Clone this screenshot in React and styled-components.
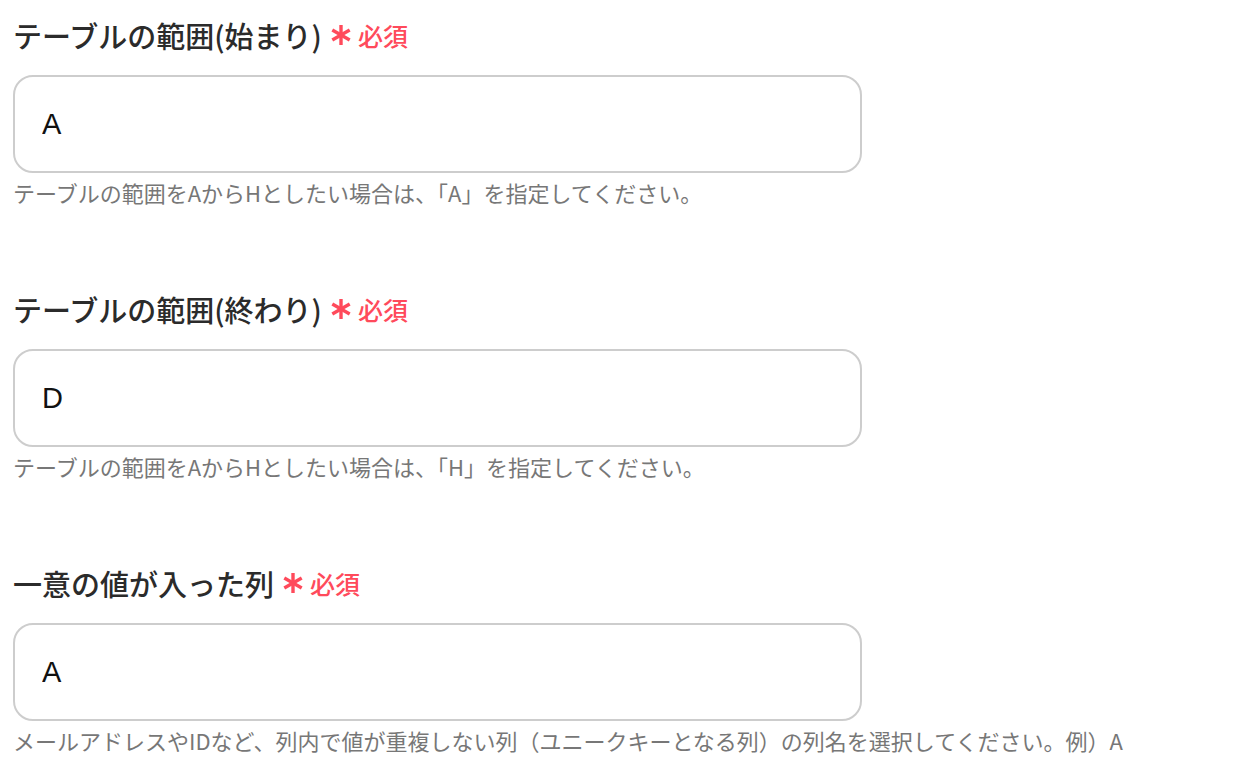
import styled, { createGlobalStyle } from "styled-components";

const GlobalStyle = createGlobalStyle`
  body {
    margin: 0;
    background: #ffffff;
    font-family: "Noto Sans CJK JP", "Noto Sans", sans-serif;
  }
`;

const Page = styled.div`
  padding: 15px 0 0 13px;
`;

const Field = styled.div`
  display: flex;
  flex-direction: column;
  align-items: flex-start;
  margin-bottom: 80px;

  &:last-child {
    margin-bottom: 0;
  }
`;

const Label = styled.div`
  display: flex;
  align-items: center;
  font-size: 29px;
  line-height: 40px;
  font-weight: 500;
  color: #2b2b2b;
  margin-bottom: 20px;
`;

const Required = styled.span`
  display: inline-flex;
  align-items: center;
  gap: 7px;
  margin-left: 9px;
  font-size: 25px;
  font-weight: 500;
  color: #ff4a5b;
`;

const Input = styled.input`
  box-sizing: border-box;
  width: 849px;
  height: 98px;
  padding: 0 27px;
  border: 2px solid #cdcdcd;
  border-radius: 20px;
  font-family: "Liberation Sans", "Noto Sans CJK JP", sans-serif;
  font-size: 29px;
  color: #111;
  background: #fff;
  outline: none;
`;

const Help = styled.div`
  margin-top: 3px;
  font-size: 22px;
  line-height: 33px;
  color: #777777;
  white-space: nowrap;
`;

const Asterisk = () => (
  <svg width="20" height="22" viewBox="0 0 20 22">
    <g stroke="#ff4a5b" strokeWidth="3.4" strokeLinecap="butt">
      <line x1="10" y1="1" x2="10" y2="21" />
      <line x1="1.3" y1="6" x2="18.7" y2="16" />
      <line x1="1.3" y1="16" x2="18.7" y2="6" />
    </g>
  </svg>
);

const fields = [
  {
    label: "テーブルの範囲(始まり)",
    value: "A",
    help: "テーブルの範囲をAからHとしたい場合は、「A」を指定してください。",
  },
  {
    label: "テーブルの範囲(終わり)",
    value: "D",
    help: "テーブルの範囲をAからHとしたい場合は、「H」を指定してください。",
  },
  {
    label: "一意の値が入った列",
    value: "A",
    help: "メールアドレスやIDなど、列内で値が重複しない列（ユニークキーとなる列）の列名を選択してください。例）A",
  },
];

export default function App() {
  return (
    <>
      <GlobalStyle />
      <Page>
        {fields.map((f) => (
          <Field key={f.label}>
            <Label>
              {f.label}
              <Required>
                <Asterisk />
                必須
              </Required>
            </Label>
            <Input readOnly defaultValue={f.value} />
            <Help>{f.help}</Help>
          </Field>
        ))}
      </Page>
    </>
  );
}
